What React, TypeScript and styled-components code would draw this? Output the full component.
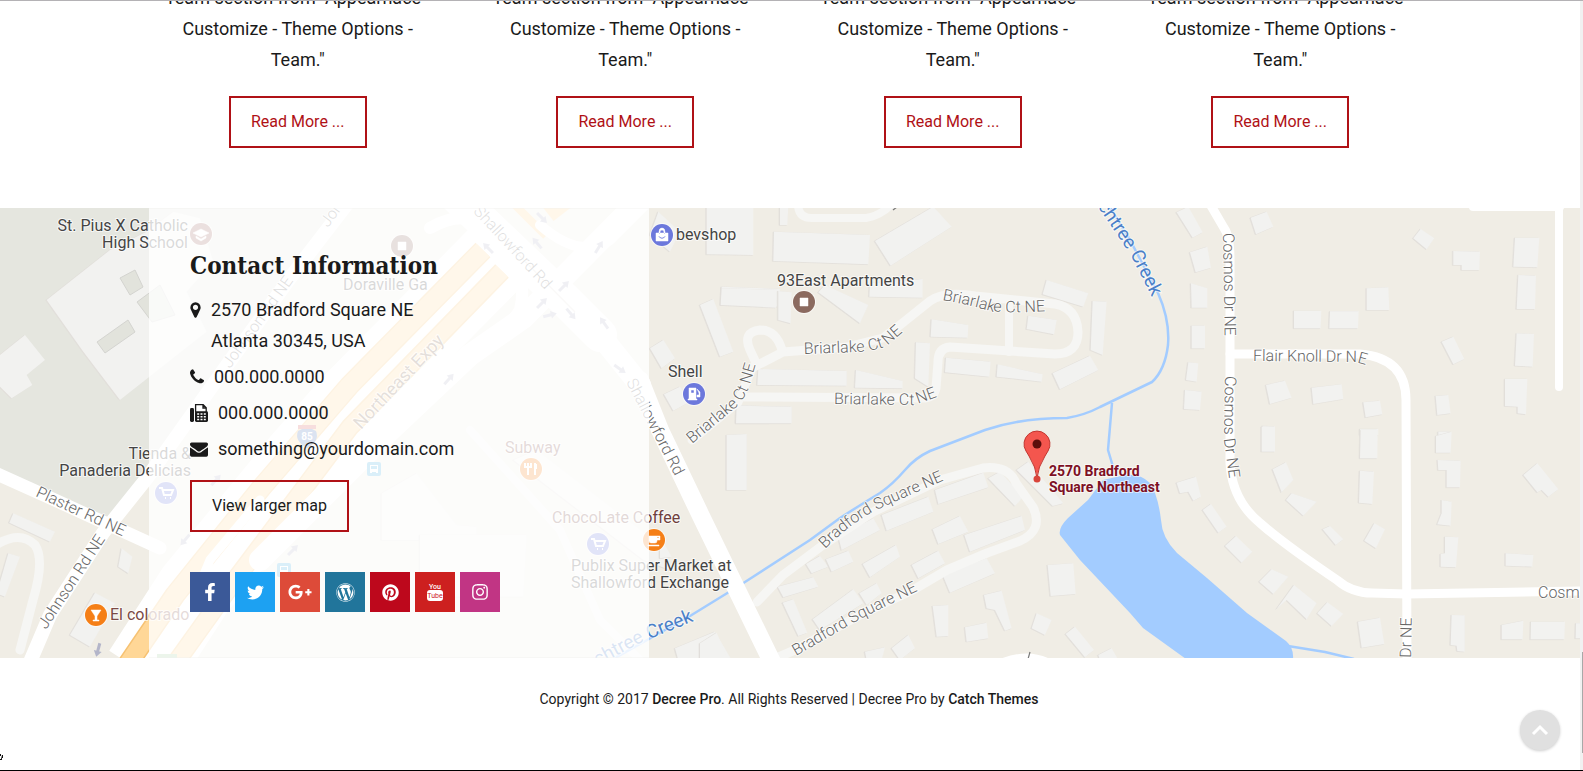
import React from "react";
import styled, { createGlobalStyle } from "styled-components";
import { FaFacebookF, FaTwitter, FaGooglePlusG, FaWordpress, FaPinterest, FaInstagram } from "react-icons/fa";

const RED = "#b01116";

const GlobalStyle = createGlobalStyle`
  * { box-sizing: border-box; }
  body {
    margin: 0;
    background: #fff;
    color: #1a1a1a;
    font-family: Roboto, "Liberation Sans", sans-serif;
    font-size: 18px;
    line-height: 31px;
    overflow: hidden;
  }
  a { color: inherit; text-decoration: none; }
  p, h2, ul, address { margin: 0; padding: 0; font-style: normal; }
  li { list-style: none; }
`;

const Window = styled.div`
  display: flex;
  min-height: 100vh;
  border-top: 1px solid #b4b2b5;
  border-bottom: 1px solid #000;
`;

const Page = styled.div`
  flex: 1;
  min-width: 0;
`;

const ScrollRail = styled.div`
  display: flex;
  flex-direction: column;
  justify-content: flex-end;
  align-items: flex-end;
  width: 3px;
  padding-bottom: 17px;
  background: #f1f1f1;
`;

const ScrollThumb = styled.div`
  width: 1px;
  height: 101px;
  background: #a8a8a8;
`;

const Container = styled.div`
  max-width: 1282px;
  margin: 0 auto;
  padding-right: 2px;
`;

const Team = styled.section`
  overflow: hidden;
  padding-bottom: 60px;
`;

const TeamGrid = styled.div`
  display: grid;
  grid-template-columns: repeat(4, 1fr);
  margin: -19px -15px 0;
`;

const Member = styled.article`
  padding: 0 30px;
  text-align: center;
`;

const OutlineLink = styled.a<{ $tone: string }>`
  display: inline-block;
  padding: 10px 20px;
  border: 2px solid ${RED};
  color: ${(p) => p.$tone};
  font-size: 16px;
  line-height: 28px;
`;

const MemberAction = styled.p`
  display: flex;
  justify-content: center;
  margin-top: 21px;
`;

const Contact = styled.section`
  position: relative;
`;

const MapCanvas = styled.svg`
  position: absolute;
  inset: 0;
  display: block;
  width: 100%;
  height: 100%;
  background: #f0ede5;
`;

const ContactPanel = styled.div`
  position: relative;
  width: 500px;
  min-height: 450px;
  padding: 40px 41px;
  border: solid rgba(240, 240, 238, 0.4);
  border-width: 1px 0;
  background: rgba(255, 255, 255, 0.8);
`;

const Heading = styled.h2`
  margin-bottom: 12px;
  font-family: "Roboto Slab", "DejaVu Serif Condensed", "DejaVu Serif", serif;
  font-size: 24px;
  font-weight: 700;
  line-height: 33px;
  white-space: nowrap;
`;

const ContactList = styled.ul`
  display: grid;
  gap: 5px;
  margin-bottom: 16px;
`;

const ContactRow = styled.li`
  display: flex;
  gap: 10px;

  svg {
    flex: none;
    height: 18px;
    margin-top: 7px;
  }
`;

const SocialList = styled.ul`
  display: flex;
  gap: 5px;
  margin-top: 40px;
`;

const SocialLink = styled.a<{ $brand: string }>`
  display: flex;
  align-items: center;
  justify-content: center;
  width: 40px;
  height: 40px;
  background: ${(p) => p.$brand};
  color: #fff;
  font-size: 18px;
`;

const Footer = styled.footer`
  padding: 28px 0 56px;
  font-size: 14px;
  line-height: 26px;
  text-align: center;

  a { font-weight: 500; }
`;

const ToTop = styled.button`
  position: fixed;
  right: 23px;
  bottom: 21px;
  display: flex;
  align-items: center;
  justify-content: center;
  width: 40px;
  height: 40px;
  padding: 0;
  border: 0;
  border-radius: 50%;
  background: #e0e0e0;
  box-shadow: 0 1px 3px rgba(0, 0, 0, 0.2);
`;

const Pointer = styled.svg`
  position: fixed;
  left: 0;
  bottom: 10px;
`;

/* ---------- icons ---------- */

const MarkerIcon = () => (
  <svg width="11" height="18" viewBox="384 0 1024 1792" fill="currentColor" aria-hidden="true">
    <path d="M1152 640q0-106-75-181t-181-75-181 75-75 181 75 181 181 75 181-75 75-181zm256 0q0 109-33 179l-364 774q-16 33-47.5 52t-67.5 19-67.5-19-46.5-52l-365-774q-33-70-33-179 0-212 150-362t362-150 362 150 150 362z" />
  </svg>
);

const PhoneIcon = () => (
  <svg width="14" height="18" viewBox="192 0 1408 1792" fill="currentColor" aria-hidden="true">
    <path d="M1600 1240q0 27-10 70.5t-21 68.5q-21 50-122 106-94 51-186 51-27 0-53-3.5t-57.5-12.5-47-14.5-55.5-20.5-49-18q-98-35-175-83-127-79-264-216t-216-264q-48-77-83-175-3-9-18-49t-20.5-55.5-14.5-47-12.5-57.5-3.5-53q0-92 51-186 56-101 106-122 25-11 68.5-21t70.5-10q14 0 21 3 18 6 53 76 11 19 30 54t35 63.5 31 53.5q3 4 17.5 25t21.5 35.5 7 28.5q0 20-28.5 50t-62 55-62 53-28.5 46q0 9 5 22.5t8.5 20.5 14 24 11.5 19q76 137 174 235t235 174q2 1 19 11.5t24 14 20.5 8.5 22.5 5q18 0 46-28.5t53-62 55-62 50-28.5q14 0 28.5 7t35.5 21.5 25 17.5q25 15 53.5 31t63.5 35 54 30q70 35 76 53 3 7 3 21z" />
  </svg>
);

const FaxIcon = () => (
  <svg width="18" height="18" viewBox="0 0 18 18" fill="none" stroke="currentColor" aria-hidden="true">
    <rect x="0" y="4" width="4" height="14" rx="1.4" fill="currentColor" stroke="none" />
    <path d="M5.6 8.4V.7h7.6l3 3v4.7M13 .7V4h3.2" strokeWidth="1.3" />
    <rect x="5" y="7.2" width="13" height="10.8" rx="1.4" fill="currentColor" stroke="none" />
    <path d="M7.2 9.9h2M10.5 9.9h2M13.8 9.9h2M7.2 12.7h2M10.5 12.7h2M13.8 12.7h2M7.2 15.5h2M10.5 15.5h2M13.8 15.5h2" stroke="#fff" strokeWidth="1.5" />
  </svg>
);

const MailIcon = () => (
  <svg width="18" height="18" viewBox="0 0 1792 1792" fill="currentColor" aria-hidden="true">
    <path d="M1792 710v794q0 66-47 113t-113 47h-1472q-66 0-113-47t-47-113v-794q44 49 101 87 362 246 497 345 57 42 92.5 65.5t94.5 48 110 24.5h2q51 0 110-24.5t94.5-48 92.5-65.5q170-123 498-345 57-39 100-87zm0-294q0 79-49 151t-122 123q-376 261-468 325-10 7-42.5 31t-54 38.5-52 32.5-57.5 27-50 9h-2q-23 0-50-9t-57.5-27-52-32.5-54-38.5-42.5-31q-91-64-262-182.5t-205-142.5q-62-42-117-115.5t-55-136.5q0-78 41.5-130t118.5-52h1472q65 0 112.5 47t47.5 113z" />
  </svg>
);

const TubeIcon = () => (
  <svg width="16" height="20" viewBox="0 0 16 20" aria-hidden="true" fontFamily="Roboto, sans-serif" textAnchor="middle">
    <text x="8" y="7" fontSize="7" fontWeight="500" fill="#fff">You</text>
    <rect x="0" y="8" width="16" height="11" rx="3" fill="#fff" />
    <text x="8" y="16" fontSize="7" fill="#cd201f">Tube</text>
  </svg>
);

/* ---------- map ---------- */

type Tile = { x: number; y: number; shapes: string[] };

// Building outlines, grouped by map tile and drawn at three units per pixel.
const buildings: Tile[] = [
  {
    x: 0, y: 205,
    shapes: [
      "0,450 75,390 135,465 80,510 97,540 35,580 0,545",
      "140,285 330,135 440,80 520,20 600,40 640,170 560,260 620,380 360,585 250,440",
    ],
  },
  {
    x: 0, y: 430,
    shapes: [
      "40,250 165,305 150,335 28,278", "25,370 60,380 15,500 -10,490", "285,488 345,520 270,650 210,615",
      "365,355 397,380 385,430 355,410",
    ],
  },
  {
    x: 350, y: 205,
    shapes: [
      "1070,0 1210,0 1210,150 1070,148", "1115,245 1290,252 1285,305 1113,300", "1050,300 1090,282 1150,440 1110,455",
      "900,430 940,405 975,460 935,490", "942,568 990,545 1020,590 970,617", "1160,600 1260,605 1260,655 1158,655",
      "925,20 990,80 960,140 900,90",
    ],
  },
  {
    x: 350, y: 430,
    shapes: [
      "1130,15 1190,12 1190,180 1130,180", "975,655 1095,605 1145,690 985,690", "95,190 200,130 320,285 380,290 380,330 95,330",
      "210,315 530,315 520,500 210,500", "490,90 560,60 950,360 960,420 880,390", "930,320 965,380 930,385",
    ],
  },
  {
    x: 700, y: 205,
    shapes: [
      "240,0 265,0 262,60 240,60", "222,80 510,90 505,178 220,168", "525,108 700,5 755,65 572,182",
      "65,250 235,255 228,308 62,300", "235,258 275,262 272,355 235,345", "375,240 505,300 480,355 355,262",
      "510,235 668,222 668,278 508,275", "1040,225 1165,265 1150,305 1028,268", "695,343 805,360 803,398 692,395",
      "985,332 1070,345 1062,388 980,372", "1178,288 1220,290 1208,450 1172,435", "648,412 690,415 685,545 645,520",
      "738,458 872,470 868,515 735,502", "893,478 1028,508 1025,530 890,515", "1058,505 1170,452 1195,495 1080,553",
      "175,492 440,498 440,542 172,540", "468,495 608,528 608,550 465,548", "110,602 275,605 275,655 108,655",
    ],
  },
  {
    x: 700, y: 430,
    shapes: [
      "545,255 685,200 700,245 560,302", "705,180 850,128 865,172 715,222", "865,145 900,125 970,200 945,228",
      "415,320 520,265 540,300 425,360", "698,298 780,258 805,305 715,342", "793,315 965,258 975,300 810,365",
      "488,402 588,345 600,380 510,442", "318,402 360,378 385,410 335,430", "378,388 445,362 460,395 395,425",
      "635,405 715,362 735,400 655,445", "728,435 860,385 885,430 750,488", "233,470 340,442 355,470 250,502",
      "248,518 280,508 322,608 295,618", "338,568 460,478 490,520 360,600", "478,490 530,460 545,490 500,525",
      "698,528 745,525 745,618 710,620", "795,592 860,578 865,625 800,635", "852,495 905,482 935,595 915,602 885,540 860,535",
      "1043,405 1120,400 1127,492 1052,498", "1010,550 1055,570 1035,615 995,595", "1097,612 1125,590 1182,660 1155,682",
      "950,120 985,95 1090,220 1058,228", "575,655 625,615 645,655 600,690", "495,665 555,652 545,690 500,690",
      "1195,675 1235,655 1255,690 1200,690", "0,640 50,608 85,690 0,690",
    ],
  },
  {
    x: 1130, y: 205,
    shapes: [
      "140,22 175,5 218,82 188,98", "180,142 232,125 243,188 197,202", "183,235 232,250 232,308 185,308",
      "185,362 225,362 225,430 185,430", "175,472 205,475 200,530 168,525", "165,555 215,560 210,615 162,612",
      "362,38 410,20 430,65 378,88", "850,100 872,72 913,100 890,133", "970,138 1050,140 1048,195 995,195 995,180 970,180",
      "1155,98 1228,98 1222,187 1150,185", "1165,210 1218,212 1215,312 1160,312", "710,250 775,247 778,315 710,315",
      "492,317 574,317 572,370 492,370", "600,319 686,319 684,370 598,370", "935,410 970,395 1003,462 970,478",
      "1160,385 1212,387 1208,485 1155,482", "1125,522 1192,522 1188,628 1163,625 1163,605 1125,603",
      "408,540 465,527 485,578 420,597", "545,548 635,538 640,582 550,597", "700,592 750,587 757,628 707,637",
      "917,573 955,570 962,625 922,630", "398,662 435,665 435,690 398,690", "690,672 745,672 745,690 690,690",
      "925,680 962,680 962,690 925,690",
    ],
  },
  {
    x: 1130, y: 430,
    shapes: [
      "395,-10 435,-10 435,65 395,65", "692,0 743,0 742,85 690,85", "918,18 965,5 962,68 918,68",
      "923,90 992,92 990,172 950,172 950,120 925,120", "690,122 732,125 727,222 687,218", "428,118 468,97 490,150 455,187",
      "468,210 485,190 560,215 520,257", "578,298 600,288 640,328 617,345", "733,280 765,298 738,355 703,332",
      "1180,135 1222,100 1285,178 1255,200 1235,180 1222,187", "935,210 965,215 962,287 922,283 935,250",
      "945,320 985,322 978,412 932,410 932,372 945,370", "1127,370 1210,375 1207,410 1127,407",
      "140,158 198,140 213,200 190,212 175,185 150,190", "218,240 243,222 290,290 265,308", "285,348 318,318 367,365 335,398",
      "388,455 425,418 475,440 430,492", "440,537 492,465 560,520 530,568 470,510", "562,550 592,517 640,552 605,588",
      "684,575 750,563 763,642 695,653", "965,555 1004,556 1004,665 982,663 980,647 962,645",
      "1115,585 1180,572 1178,628 1115,628", "1203,575 1305,575 1303,628 1202,628", "1338,580 1360,580 1360,625 1337,625",
    ],
  },
];

const whiteRoads: [string, number][] = [
  ["M-5 473 L35 491 L103 522 L160 548", 13],
  ["M30 662 L50 615 L103 533 L147 478 L225 368 L290 278 L350 200", 14],
  ["M640 380 L660 430 L700 514 L773 664", 18],
  ["M455 195 L563 298 L600 335", 34],
  ["M600 335 L640 385", 22],
  ["M260 560 L383 437 L470 355 L523 318 L640 200", 22],
  ["M430 228 Q470 205 495 235 Q530 270 520 310 L500 340", 12],
  ["M540 225 Q580 260 610 240 L650 200", 10],
  ["M1210 204 L1224 228 Q1230 236 1230 260 L1230 463 Q1232 500 1260 523 Q1285 545 1337 580 Q1352 593 1372 593 L1407 594 L1584 591", 9],
  ["M1230 354 L1360 354 Q1406 358 1406 400 L1407 662", 9],
  ["M1559 204 L1559 387", 8],
  ["M1473 207 L1560 207", 8],
  ["M185 620 L210 560 L260 500", 9],
];

const paleRoads: [string, number][] = [
  ["M692 440 L738 402 L752 368 L783 352 L847 347 L883 338 L900 325 L930 301 Q945 291 975 296 L1055 304 Q1077 308 1078 332 Q1078 354 1055 354 L950 347 Q938 348 938 362 L936 388 Q934 398 922 398 L742 397", 9],
  ["M782 350 Q776 330 760 330 Q742 332 750 350 L757 365", 9],
  ["M1009 306 L1009 352", 8],
  ["M798 204 Q798 218 812 218 L866 218 Q880 216 892 204", 8],
  ["M757 602 L783 575 L823 545 L873 512 L940 480 L983 468 Q1008 465 1016 483 L1033 507 Q1044 530 1020 541 L987 553 L947 570 L913 590 L860 615 L795 650 L767 662", 9],
  ["M-4 545 Q20 530 35 545 Q45 560 33 600 L20 650", 9],
  ["M470 430 L560 530 L600 620 L640 660", 8],
];

const roadNames: { id: string; d: string; name: string; end?: boolean }[] = [
  { id: "plaster", d: "M35 496 L135 542", name: "Plaster Rd NE" },
  { id: "johnson-s", d: "M46 630 L109 534", name: "Johnson Rd NE" },
  { id: "johnson-n", d: "M230 369 L305 265", name: "Johnson Rd NE" },
  { id: "johnson-t", d: "M328 228 L400 129", name: "Johnson Rd NE" },
  { id: "shallow-n", d: "M440 176 L545 290", name: "Shallowford Rd", end: true },
  { id: "shallow-s", d: "M626 382 L690 505", name: "Shallowford Rd" },
  { id: "briar-n", d: "M942 300 Q970 305 990 311 Q1015 314 1060 310", name: "Briarlake Ct NE" },
  { id: "briar-m", d: "M804 354 L858 352 Q880 350 888 345 L920 317", name: "Briarlake Ct NE" },
  { id: "briar-s", d: "M834 404 L915 405 L945 394", name: "Briarlake Ct NE" },
  { id: "briar-w", d: "M692 444 L733 410 Q745 400 750 384 L760 350", name: "Briarlake Ct NE" },
  { id: "brad-n", d: "M825 549 Q850 524 876 510 L958 474", name: "Bradford Square NE" },
  { id: "brad-s", d: "M796 656 L860 619 L940 580", name: "Bradford Square NE" },
  { id: "cosmos-n", d: "M1223 233 L1225 350", name: "Cosmos Dr NE" },
  { id: "cosmos-s", d: "M1225 376 L1224 440 L1232 500", name: "Cosmos Dr NE" },
  { id: "flair", d: "M1253 361 L1355 362 L1385 370", name: "Flair Knoll Dr NE" },
  { id: "cosmos-e", d: "M1538 598 L1680 598", name: "Cosmos Dr NE" },
  { id: "dr-ne", d: "M1411 658 L1413 560", name: "Dr NE" },
];

const creekNames = [
  { id: "creek-n", d: "M1040 118 L1100 210 L1130 254 L1152 297" },
  { id: "creek-s", d: "M560 686 L642 642 L694 621" },
];

const places: { x: number; y: number; text: string; end?: boolean; tone?: string }[] = [
  { x: 188, y: 231, text: "St. Pius X Catholic", end: true },
  { x: 188, y: 248, text: "High School", end: true },
  { x: 343, y: 290, text: "Doraville Ga" },
  { x: 676, y: 240, text: "bevshop" },
  { x: 668, y: 377, text: "Shell" },
  { x: 777, y: 286, text: "93East Apartments" },
  { x: 505, y: 453, text: "Subway", tone: "#7b4a45" },
  { x: 552, y: 523, text: "ChocoLate Coffee", tone: "#6f403c" },
  { x: 571, y: 571, text: "Publix Super Market at" },
  { x: 571, y: 588, text: "Shallowford Exchange" },
  { x: 191, y: 459, text: "Tienda &", end: true },
  { x: 191, y: 476, text: "Panaderia Delicias", end: true },
  { x: 110, y: 620, text: "El colorado", tone: "#7b4a45" },
];

const cart = "M-7 -5 L-4 -5 L-2 2 L5 2 L7 -3 L-3 -3 M-1 5 L0 5 M4 5 L5 5";

const pois: { x: number; y: number; fill: string; glyph: string; solid?: boolean }[] = [
  { x: 201, y: 234, fill: "#9c645f", glyph: "M-8 -1 L0 -5 L8 -1 L0 3 Z M-5 2 L0 5 L5 2 L5 4 L0 7 L-5 4 Z", solid: true },
  { x: 402, y: 246, fill: "#8b6a5f", glyph: "M-4 -4 H4 V4 H-4 Z", solid: true },
  { x: 804, y: 302, fill: "#8b6a5f", glyph: "M-4 -4 H4 V4 H-4 Z", solid: true },
  { x: 662, y: 235, fill: "#6c78dc", glyph: "M-6 -2 H6 V6 H-6 Z M-3 -1 V-3 Q-3 -7 0 -7 Q3 -7 3 -3 V-1 H2 V-3 Q2 -5 0 -5 Q-2 -5 -2 -3 V-1 Z M-4 1 Q0 7 4 1 L3 1 Q0 4 -3 1 Z", solid: true },
  { x: 694, y: 394, fill: "#6c78dc", glyph: "M-5 -6 H2 V5 H3 V6 H-6 V5 H-5 Z M-3 -4 V-1 H0 V-4 Z M3 -5 L6 -2 V3 L3 3 V1 L5 1 V-1 Z", solid: true },
  { x: 166, y: 493, fill: "#6c78dc", glyph: cart },
  { x: 598, y: 544, fill: "#6c78dc", glyph: cart },
  { x: 531, y: 469, fill: "#f57f17", glyph: "M-3 6 V-6 M-6 -6 V-2 H0 V-6 M4 6 V-6 M5 -5 V0" },
  { x: 654, y: 540, fill: "#f57f17", glyph: "M-5 -4 H3 V1 Q3 3 1 3 H-3 Q-5 3 -5 1 Z M3 -4 H6 V0 H3 V-2 H5 V-3 H3 Z M-6 5 H5 V6 H-6 Z", solid: true },
  { x: 96, y: 615, fill: "#f57f17", glyph: "M-5 -5 H5 L1 1 V5 H3 V6 H-3 V5 H-1 V1 Z", solid: true },
];

// x, y and heading in degrees of each one-way arrow
const arrows: [number, number, number][] = [
  [98, 650, 105], [449, 379, -48], [488, 248, -135], [542, 218, 45], [537, 243, -130], [599, 247, -58],
  [564, 286, -45], [542, 303, -45], [550, 315, -15], [571, 314, 50], [604, 323, -125], [620, 369, 35],
  [293, 550, -45], [185, 540, 130], [216, 480, -48],
];

const Map = () => (
  <MapCanvas viewBox="0 208 1580 450" preserveAspectRatio="xMidYMid slice" role="img" aria-label="Map of 2570 Bradford Square Northeast">
    <path d="M0 208 H345 L225 366 L147 480 L105 528 L0 480 Z" fill="#e5e6df" />
    {buildings.map((t) => (
      <g key={`${t.x}-${t.y}`} transform={`translate(${t.x} ${t.y}) scale(0.33333)`}>
        {t.shapes.map((s) => (
          <g key={s}>
            <polygon points={s} fill="#e2dfdb" stroke="#e2dfdb" strokeWidth="2" transform="translate(-3 1)" />
            <polygon points={s} fill="#f2f2f0" />
          </g>
        ))}
      </g>
    ))}
    <g fill="#e2e3dc" stroke="#d4d4d0" strokeWidth="1">
      <path d="M120 278 L135 270 L143 287 L130 295 Z" />
      <path d="M97 342 L128 320 L135 332 L105 353 Z" />
      <path d="M137 302 L160 285 L175 315 L152 322 Z" />
    </g>

    <g fill="none" stroke="#f6f6f4" strokeLinecap="round" strokeLinejoin="round">
      {paleRoads.map(([d, w]) => <path key={d} d={d} strokeWidth={w} />)}
    </g>

    <g fill="none" stroke="#a3ccff" strokeWidth="2.5" strokeLinejoin="round">
      <path d="M590 672 L640 644 L690 616 L729 592 L745 582 L810 540 L840 518 Q865 502 880 493 Q893 484 905 470 Q915 458 930 451 L985 430 Q1020 418 1067 418 Q1085 415 1100 407 L1152 382 Q1165 370 1168 345 Q1170 320 1158 293 L1130 240 L1108 204" />
      <path d="M1112 403 L1108 450 L1114 470" />
      <path d="M1288 646 L1325 652 L1354 659" />
    </g>
    <path d="M1103 480 L1088 500 L1068 518 Q1058 528 1060 535 L1080 560 L1130 613 L1143 628 L1186 659 H1293 Q1294 648 1286 641 L1247 613 L1207 578 L1177 553 Q1162 538 1161 520 Q1158 495 1150 483 Q1140 473 1125 475 Z" fill="#a3ccff" />

    <g fill="none" strokeLinejoin="round">
      <path d="M142 672 L195 590 L300 462 L350 405 L505 248" stroke="#fff" strokeWidth="78" />
      <path d="M128 664 L175 595 L262 487 L350 385 L483 250" stroke="#f6c273" strokeWidth="21" />
      <path d="M172 668 L235 580 L350 427 L502 271" stroke="#f6c273" strokeWidth="19" />
      <path d="M128 664 L175 595 L262 487 L350 385 L483 250" stroke="#ffd797" strokeWidth="18" />
      <path d="M172 668 L235 580 L350 427 L502 271" stroke="#ffd797" strokeWidth="16" />
      <path d="M480 228 L520 268 M515 205 L546 236" stroke="#ffd797" strokeWidth="8" />
      <path d="M548 214 L566 200" stroke="#ffd797" strokeWidth="18" />
    </g>
    <g fill="none" stroke="#fff" strokeLinecap="round" strokeLinejoin="round">
      {whiteRoads.map(([d, w]) => <path key={d} d={d} strokeWidth={w} />)}
    </g>
    <path d="M500 236 L575 312" stroke="#e6e2dc" strokeWidth="1.5" />
    <path d="M1000 659 Q1028 648 1050 659 Z" fill="#fff" />
    <path d="M1028 659 L1030 652" stroke="#777" strokeWidth="1.2" />
    <path d="M893 210 L897 207" stroke="#777" strokeWidth="1.2" />
    <rect x="157" y="654" width="20" height="4" fill="#9fca9b" />

    <g stroke="#b3b5c9" strokeWidth="3" fill="#b3b5c9">
      {arrows.map(([x, y, a]) => (
        <g key={`${x}-${y}`} transform={`translate(${x} ${y}) rotate(${a})`}>
          <path d="M-7 0 H2" />
          <path d="M1 -4 L7 0 L1 4 Z" stroke="none" />
        </g>
      ))}
    </g>

    <g>
      <path d="M298 431 Q307 425 316 431 Q320 441 307 448 Q294 441 298 431 Z" fill="#4a72b8" />
      <rect x="298" y="425" width="18" height="4" fill="#d65a5a" />
      <text x="307" y="440" fontSize="10" fontWeight="700" fill="#fff" textAnchor="middle">85</text>
    </g>
    {[[374, 469], [284, 570]].map(([x, y]) => (
      <g key={x} transform={`translate(${x} ${y})`}>
        <rect x="-7" y="-7" width="14" height="14" rx="2" fill="#49b0e0" />
        <path d="M-4 -4 H4 V4 H2 V3 H-2 V4 H-4 Z M-3 -3 V0 H3 V-3 Z" fill="#fff" fillRule="evenodd" />
      </g>
    ))}

    <g fontSize="16" fill="#666" fontWeight="300" stroke="#fff" strokeOpacity="0.7" strokeWidth="2" strokeLinejoin="round" paintOrder="stroke">
      {roadNames.map((r) => (
        <g key={r.id}>
          <path id={r.id} d={r.d} fill="none" stroke="none" />
          <text textAnchor={r.end ? "end" : "start"}>
            <textPath href={`#${r.id}`} startOffset={r.end ? "100%" : "0"}>{r.name}</textPath>
          </text>
        </g>
      ))}
      <path id="expy" d="M361 430 L465 320" fill="none" stroke="none" />
      <text fontSize="18" fontWeight="400" fill="#7a5f4a">
        <textPath href="#expy">Northeast Expy</textPath>
      </text>
    </g>
    <g fontSize="19" fill="#4a7fc8" stroke="#fff" strokeOpacity="0.6" strokeWidth="2" paintOrder="stroke">
      {creekNames.map((c) => (
        <g key={c.id}>
          <path id={c.id} d={c.d} fill="none" stroke="none" />
          <text textAnchor="end">
            <textPath href={`#${c.id}`} startOffset="100%">Peachtree Creek</textPath>
          </text>
        </g>
      ))}
    </g>

    {pois.map((p) => (
      <g key={`${p.x}-${p.y}`} transform={`translate(${p.x} ${p.y})`}>
        <circle r="12" fill="#fff" opacity="0.6" />
        <circle r="11" fill={p.fill} />
        <path d={p.glyph} fill={p.solid ? "#fff" : "none"} fillRule="evenodd" stroke="#fff" strokeWidth={p.solid ? 0.5 : 2} />
      </g>
    ))}
    <g fontSize="16" stroke="#fff" strokeOpacity="0.7" strokeWidth="2" strokeLinejoin="round" paintOrder="stroke">
      {places.map((p) => (
        <text key={p.text} x={p.x} y={p.y} fill={p.tone ?? "#444"} textAnchor={p.end ? "end" : "start"}>{p.text}</text>
      ))}
    </g>

    <path d="M1037 478 Q1036 467 1029 456 L1026 451 A13 13 0 1 1 1048 451 L1045 456 Q1038 467 1037 478 Z" fill="#f4564e" stroke="#c2352f" strokeWidth="1" />
    <circle cx="1037" cy="444" r="4.5" fill="#5c0d0b" />
    <circle cx="1037" cy="479" r="3.5" fill="#d9453c" />
    <g fontSize="14" fontWeight="700" fill="#7d1024" stroke="#fff" strokeOpacity="0.6" strokeWidth="2" paintOrder="stroke">
      <text x="1049" y="476">2570 Bradford</text>
      <text x="1049" y="492">Square Northeast</text>
    </g>
  </MapCanvas>
);

/* ---------- page ---------- */

const members = ["one", "two", "three", "four"];

const socials = [
  { label: "Facebook", brand: "#3b5998", icon: <FaFacebookF /> },
  { label: "Twitter", brand: "#1da1f2", icon: <FaTwitter size={17} /> },
  { label: "Google Plus", brand: "#dd4b39", icon: <FaGooglePlusG size={24} /> },
  { label: "WordPress", brand: "#21759b", icon: <FaWordpress size={19} /> },
  { label: "Pinterest", brand: "#bd081c", icon: <FaPinterest size={17} /> },
  { label: "YouTube", brand: "#cd201f", icon: <TubeIcon /> },
  { label: "Instagram", brand: "#c13584", icon: <FaInstagram size={18} /> },
];

export default function App() {
  return (
    <Window>
      <GlobalStyle />
      <Page>
        <Team>
          <Container>
            <TeamGrid>
              {members.map((m) => (
                <Member key={m}>
                  <p>Team section from "Appearnace - Customize - Theme Options - Team."</p>
                  <MemberAction>
                    <OutlineLink href="#" $tone={RED}>Read More ...</OutlineLink>
                  </MemberAction>
                </Member>
              ))}
            </TeamGrid>
          </Container>
        </Team>

        <Contact>
          <Map />
          <Container>
            <ContactPanel>
              <Heading>Contact Information</Heading>
              <ContactList>
                <ContactRow>
                  <MarkerIcon />
                  <address>2570 Bradford Square NE<br />Atlanta 30345, USA</address>
                </ContactRow>
                <ContactRow><PhoneIcon /><a href="tel:0000000000">000.000.0000</a></ContactRow>
                <ContactRow><FaxIcon /><span>000.000.0000</span></ContactRow>
                <ContactRow><MailIcon /><a href="mailto:something@yourdomain.com">something@yourdomain.com</a></ContactRow>
              </ContactList>
              <OutlineLink href="#" $tone="#1a1a1a">View larger map</OutlineLink>
              <SocialList>
                {socials.map((s) => (
                  <li key={s.label}>
                    <SocialLink href="#" $brand={s.brand} aria-label={s.label}>{s.icon}</SocialLink>
                  </li>
                ))}
              </SocialList>
            </ContactPanel>
          </Container>
        </Contact>

        <Footer>
          <Container>
            Copyright © 2017 <a href="#">Decree Pro</a>. All Rights Reserved | Decree Pro by <a href="#">Catch Themes</a>
          </Container>
        </Footer>
      </Page>
      <ScrollRail><ScrollThumb /></ScrollRail>
      <ToTop type="button" aria-label="Back to top">
        <svg width="18" height="12" viewBox="0 0 18 12" fill="none" stroke="#fff" strokeWidth="3" aria-hidden="true">
          <path d="M2 10 L9 3 L16 10" />
        </svg>
      </ToTop>
      <Pointer width="4" height="8" viewBox="0 0 4 8" aria-hidden="true">
        <path d="M0 1 H1 V3 H0 Z M2 2 H3 V5 H2 V7 H0 V6 H1" fill="#111" />
      </Pointer>
    </Window>
  );
}
